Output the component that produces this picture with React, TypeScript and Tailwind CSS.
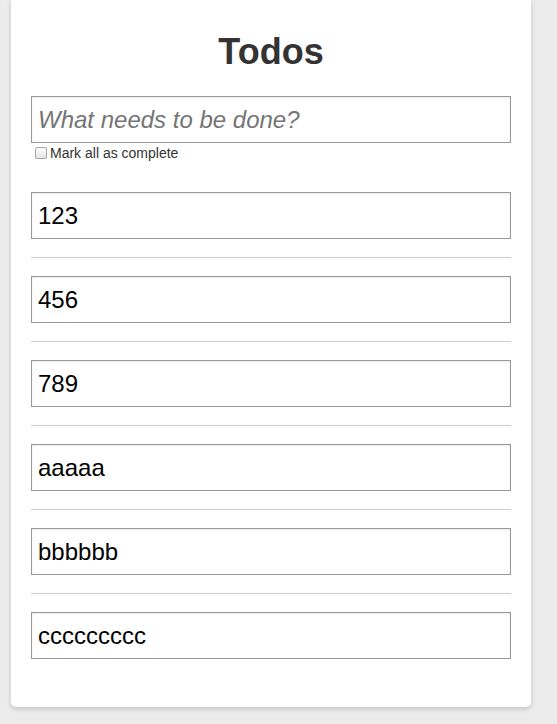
import React from "react";

const todos = ["123", "456", "789", "aaaaa", "bbbbbb", "ccccccccc"];

export default function App() {
  return (
    <div
      className="min-h-[724px] w-full bg-[#ececec]"
      style={{ fontFamily: '"Liberation Sans", Arial, sans-serif' }}
    >
      <div className="ml-[11px] w-[520px] rounded-b-[5px] bg-white px-[20px] pt-[34px] pb-[30px] shadow-[0_2px_5px_rgba(0,0,0,0.18)]">
        <h1 className="text-center text-[36px] leading-[36px] font-bold text-[#333]">Todos</h1>
        <input
          className="mt-[26px] block h-[47px] w-[480px] border border-[#999] bg-white pl-[6px] text-[24px] text-black italic outline-none shadow-[inset_0_1px_2px_rgba(0,0,0,0.08)] placeholder:text-[#757575]"
          placeholder="What needs to be done?"
        />
        <label className="mt-[2px] flex h-[16px] items-center text-[14px] leading-[16px] text-[#333]">
          <input
            type="checkbox"
            className="m-0 ml-[4px] mr-[3px] h-[12px] w-[12px] appearance-none rounded-[2px] border border-[#a6a6a6] bg-gradient-to-b from-[#fcfcfc] to-[#e6e6e6]"
          />
          <span>Mark all as complete</span>
        </label>
        <ul className="mt-[13px]">
          {todos.map((t, i) => (
            <li
              key={t}
              className={
                i === todos.length - 1
                  ? "py-[18px]"
                  : "border-b border-[#cccccc] py-[18px]"
              }
            >
              <input
                defaultValue={t}
                className="block h-[47px] w-[480px] border border-[#999] bg-white pl-[6px] text-[24px] text-black outline-none shadow-[inset_0_1px_2px_rgba(0,0,0,0.08)]"
              />
            </li>
          ))}
        </ul>
      </div>
    </div>
  );
}
